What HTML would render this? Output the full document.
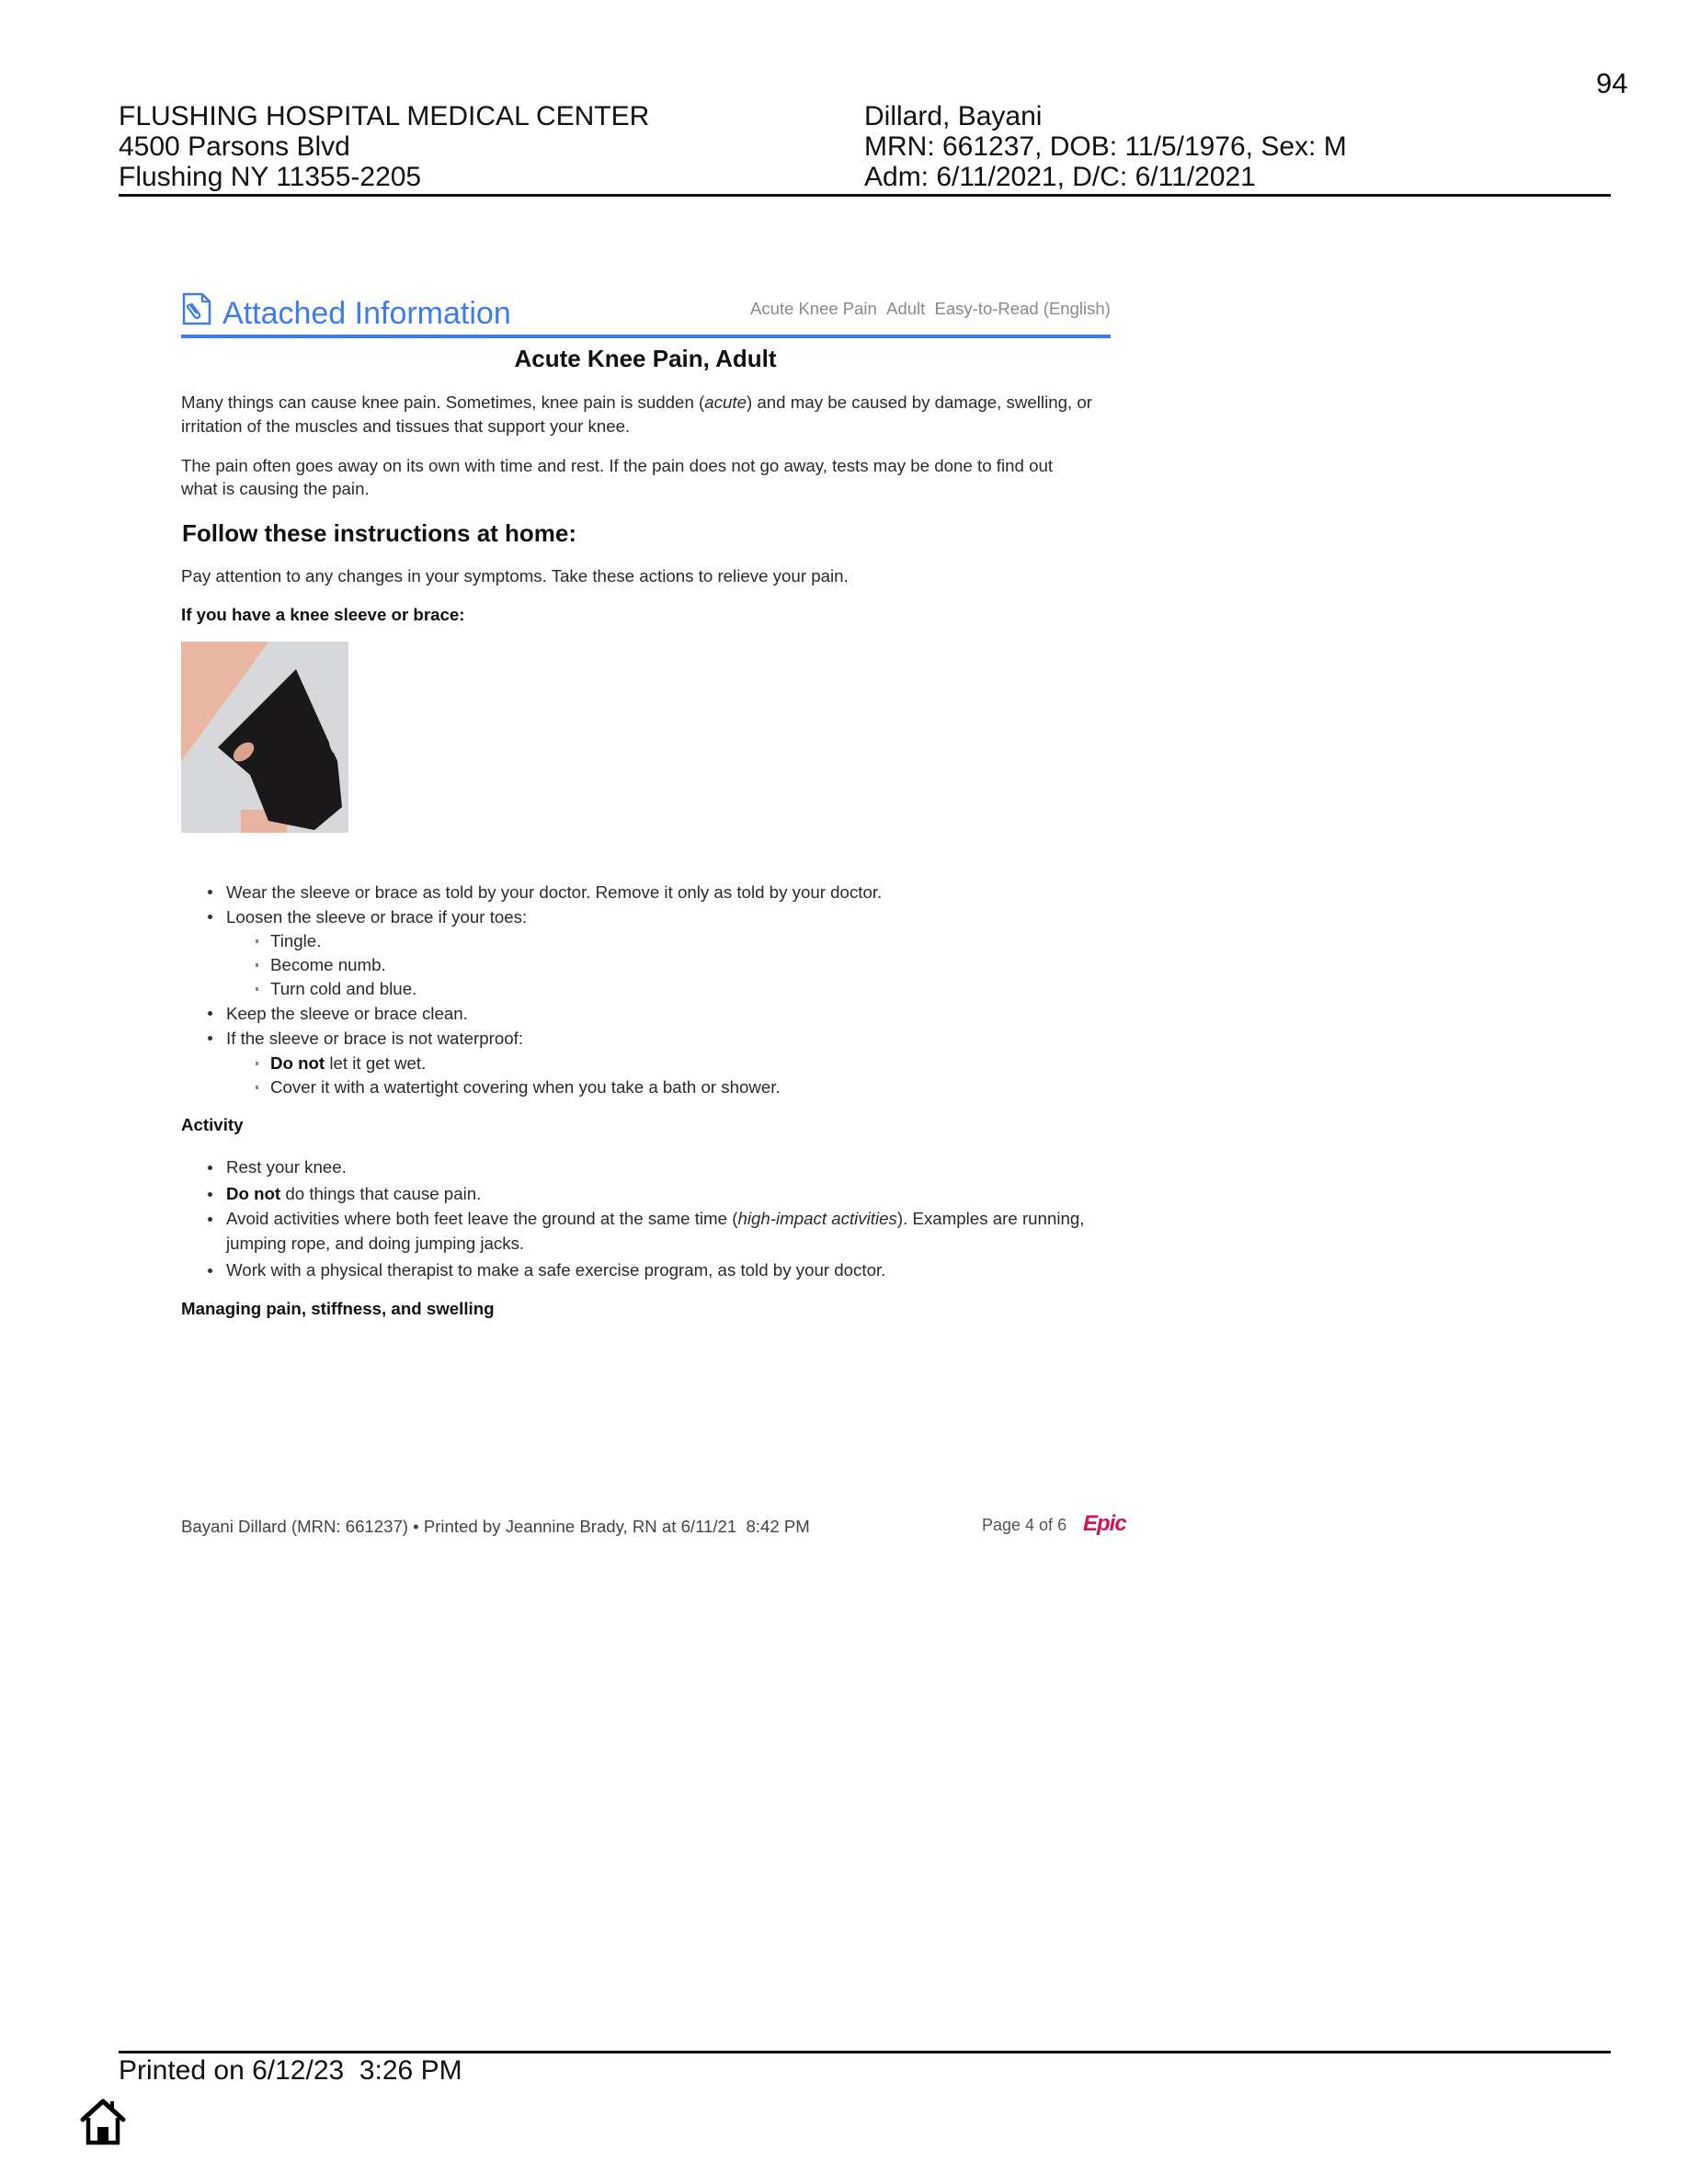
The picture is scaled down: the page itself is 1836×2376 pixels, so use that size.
<!DOCTYPE html>
<html><head><meta charset="utf-8">
<style>
html,body{margin:0;padding:0;background:#fff;}
body{width:1836px;height:2376px;position:relative;overflow:hidden;font-family:"Liberation Sans",Arial,sans-serif;color:#222;}
.a{position:absolute;white-space:nowrap;}
.h{font-size:30px;color:#111;line-height:34px;}
.b{font-size:18.7px;line-height:26px;color:#2a2a2a;}
.bd{font-weight:bold;color:#111;}
.dot{position:absolute;width:5px;height:5px;border-radius:50%;background:#333;}
.sdot{position:absolute;width:3px;height:4px;background:#888;}
</style></head><body>

<div class="a h" style="left:1736px;top:74px;font-size:31px;">94</div>
<div class="a h" style="left:129px;top:110px;">FLUSHING HOSPITAL MEDICAL CENTER</div>
<div class="a h" style="left:129px;top:143px;">4500 Parsons Blvd</div>
<div class="a h" style="left:129px;top:176px;">Flushing NY 11355-2205</div>
<div class="a h" style="left:940px;top:110px;">Dillard, Bayani</div>
<div class="a h" style="left:940px;top:143px;">MRN: 661237, DOB: 11/5/1976, Sex: M</div>
<div class="a h" style="left:940px;top:176px;">Adm: 6/11/2021, D/C: 6/11/2021</div>
<div class="a" style="left:129px;top:211px;width:1623px;height:3px;background:#111;"></div>

<svg class="a" style="left:198px;top:318px" width="32" height="36" viewBox="0 0 32 36">
<path d="M2 2h20l8 8v24H2z" fill="none" stroke="#3d7cf0" stroke-width="2.5"/>
<path d="M22 2v8h8" fill="none" stroke="#3d7cf0" stroke-width="2"/>
<path d="M10 12l9 12a3 3 0 0 1-5 3l-8-11a2 2 0 0 1 3-2l7 9" fill="none" stroke="#3d7cf0" stroke-width="2.2"/>
</svg>
<div class="a" style="left:242px;top:320px;font-size:34px;line-height:42px;color:#3d7cf0;">Attached Information</div>
<div class="a" style="left:816px;top:325px;font-size:18.5px;line-height:22px;color:#8a8a8a;">Acute Knee Pain &nbsp;Adult &nbsp;Easy-to-Read (English)</div>
<div class="a" style="left:197px;top:364px;width:1011px;height:4px;background:#3d7cf0;"></div>

<div class="a bd" style="left:702px;top:374px;font-size:26px;line-height:32px;transform:translateX(-50%);">Acute Knee Pain, Adult</div>

<div class="a b" style="left:197px;top:425px;">Many things can cause knee pain. Sometimes, knee pain is sudden (<i>acute</i>) and may be caused by damage, swelling, or</div>
<div class="a b" style="left:197px;top:451px;">irritation of the muscles and tissues that support your knee.</div>
<div class="a b" style="left:197px;top:494px;">The pain often goes away on its own with time and rest. If the pain does not go away, tests may be done to find out</div>
<div class="a b" style="left:197px;top:519px;">what is causing the pain.</div>
<div class="a bd" style="left:198px;top:564px;font-size:26px;line-height:32px;">Follow these instructions at home:</div>
<div class="a b" style="left:197px;top:614px;">Pay attention to any changes in your symptoms. Take these actions to relieve your pain.</div>
<div class="a b bd" style="left:197px;top:656px;">If you have a knee sleeve or brace:</div>

<svg class="a" style="left:197px;top:698px" width="182" height="208" viewBox="0 0 182 208">
<rect width="182" height="208" fill="#d6d8dc"/>
<path d="M0 0h95l-25 35L0 130z" fill="#e9b7a2"/>
<path d="M65 208h50l3-25H65z" fill="#e7b39e"/>
<path d="M40 115L125 30l45 100 5 50-30 25-50-10-20-50z" fill="#1b1819"/>
<ellipse cx="68" cy="120" rx="13" ry="8" fill="#d9a38e" transform="rotate(-40 68 120)"/>
<ellipse cx="168" cy="100" rx="8" ry="22" fill="#d6d8dc"/>
</svg>

<div class="dot" style="left:226px;top:968px"></div><div class="a b" style="left:246px;top:958px;">Wear the sleeve or brace as told by your doctor. Remove it only as told by your doctor.</div>
<div class="dot" style="left:226px;top:995px"></div><div class="a b" style="left:246px;top:985px;">Loosen the sleeve or brace if your toes:</div>
<div class="sdot" style="left:278px;top:1022px"></div><div class="a b" style="left:294px;top:1011px;">Tingle.</div>
<div class="sdot" style="left:278px;top:1048px"></div><div class="a b" style="left:294px;top:1037px;">Become numb.</div>
<div class="sdot" style="left:278px;top:1074px"></div><div class="a b" style="left:294px;top:1063px;">Turn cold and blue.</div>
<div class="dot" style="left:226px;top:1100px"></div><div class="a b" style="left:246px;top:1090px;">Keep the sleeve or brace clean.</div>
<div class="dot" style="left:226px;top:1127px"></div><div class="a b" style="left:246px;top:1117px;">If the sleeve or brace is not waterproof:</div>
<div class="sdot" style="left:278px;top:1155px"></div><div class="a b" style="left:294px;top:1144px;"><b style="color:#111">Do not</b> let it get wet.</div>
<div class="sdot" style="left:278px;top:1181px"></div><div class="a b" style="left:294px;top:1170px;">Cover it with a watertight covering when you take a bath or shower.</div>

<div class="a b bd" style="left:197px;top:1211px;">Activity</div>
<div class="dot" style="left:226px;top:1268px"></div><div class="a b" style="left:246px;top:1257px;">Rest your knee.</div>
<div class="dot" style="left:226px;top:1297px"></div><div class="a b" style="left:246px;top:1286px;"><b style="color:#111">Do not</b> do things that cause pain.</div>
<div class="dot" style="left:226px;top:1324px"></div><div class="a b" style="left:246px;top:1313px;">Avoid activities where both feet leave the ground at the same time (<i>high-impact activities</i>). Examples are running,</div>
<div class="a b" style="left:246px;top:1340px;">jumping rope, and doing jumping jacks.</div>
<div class="dot" style="left:226px;top:1380px"></div><div class="a b" style="left:246px;top:1369px;">Work with a physical therapist to make a safe exercise program, as told by your doctor.</div>
<div class="a b bd" style="left:197px;top:1411px;">Managing pain, stiffness, and swelling</div>

<div class="a" style="left:197px;top:1650px;font-size:18.6px;line-height:22px;color:#444;">Bayani Dillard (MRN: 661237) • Printed by Jeannine Brady, RN at 6/11/21 &nbsp;8:42 PM</div>
<div class="a" style="left:1068px;top:1648px;font-size:18px;line-height:22px;color:#555;">Page 4 of 6</div>
<div class="a" style="left:1178px;top:1644px;font-size:24px;line-height:28px;color:#d4145a;font-weight:bold;font-style:italic;letter-spacing:-1px;">Epic</div>

<div class="a" style="left:129px;top:2231px;width:1623px;height:3px;background:#111;"></div>
<div class="a h" style="left:129px;top:2236px;font-size:30px;">Printed on 6/12/23 &nbsp;3:26 PM</div>

<svg class="a" style="left:86px;top:2282px" width="52" height="52" viewBox="0 0 52 52">
<path d="M4 24L26 4l22 20" fill="none" stroke="#000" stroke-width="5" stroke-linejoin="round" stroke-linecap="round"/>
<path d="M36 4v10" stroke="#000" stroke-width="4"/>
<path d="M10 22v27h32V22" fill="none" stroke="#000" stroke-width="4.5"/>
<rect x="20" y="32" width="12" height="17" fill="#000"/>
</svg>
</body></html>
